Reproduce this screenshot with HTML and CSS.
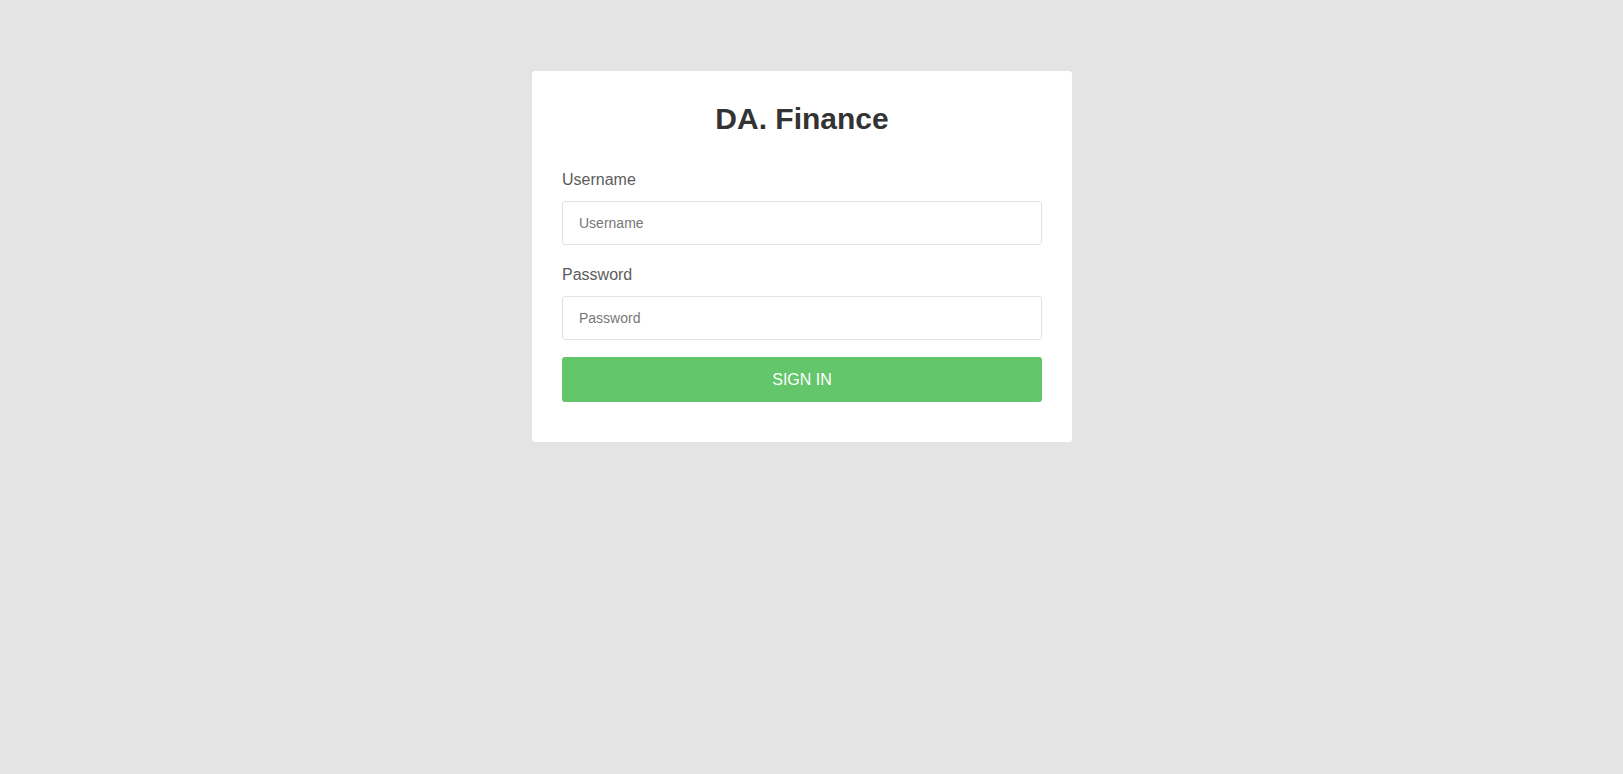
FILE: index.html
```html
<!DOCTYPE html>
<html lang="en">
<head>
<meta charset="utf-8">
<title>DA. Finance</title>
<link rel="stylesheet" href="styles.css">
</head>
<body>
<div class="page">
  <form class="card">
    <h1 class="title">DA. Finance</h1>
    <label class="label label-first" for="username">Username</label>
    <input class="field" id="username" type="text" placeholder="Username">
    <label class="label" for="password">Password</label>
    <input class="field" id="password" type="password" placeholder="Password">
    <button class="btn" type="button">SIGN IN</button>
  </form>
</div>
</body>
</html>
```
FILE: styles.css
```css
html, body {
  margin: 0;
  padding: 0;
  background: #e4e4e4;
  font-family: "Liberation Sans", Arial, sans-serif;
}
.page {
  display: flex;
  justify-content: center;
  align-items: flex-start;
  padding: 71px 19px 0 0;
  min-height: 774px;
  box-sizing: border-box;
}
.card {
  width: 540px;
  box-sizing: border-box;
  background: #fff;
  border-radius: 3px;
  padding: 31px 30px 40px;
  display: flex;
  flex-direction: column;
}
.title {
  margin: 0;
  font-size: 30px;
  line-height: 33px;
  font-weight: bold;
  color: #333;
  text-align: center;
}
.label {
  display: block;
  font-size: 16px;
  line-height: 21px;
  color: #5c5c5c;
  margin: 19px 0 11px;
}
.label-first {
  margin-top: 34px;
}
.field {
  display: block;
  width: 100%;
  height: 44px;
  box-sizing: border-box;
  margin: 0;
  padding: 0 16px;
  border: 1px solid #e2e2e2;
  border-radius: 3px;
  font-family: "Liberation Sans", Arial, sans-serif;
  font-size: 14px;
  color: #555;
  background: #fff;
  outline: none;
}
.field::placeholder {
  color: #777;
}
.btn {
  display: block;
  width: 100%;
  height: 45px;
  margin: 17px 0 0;
  padding: 0;
  border: none;
  border-radius: 3px;
  background: #63c66b;
  color: #fff;
  font-family: "Liberation Sans", Arial, sans-serif;
  font-size: 16px;
  cursor: pointer;
}
```
